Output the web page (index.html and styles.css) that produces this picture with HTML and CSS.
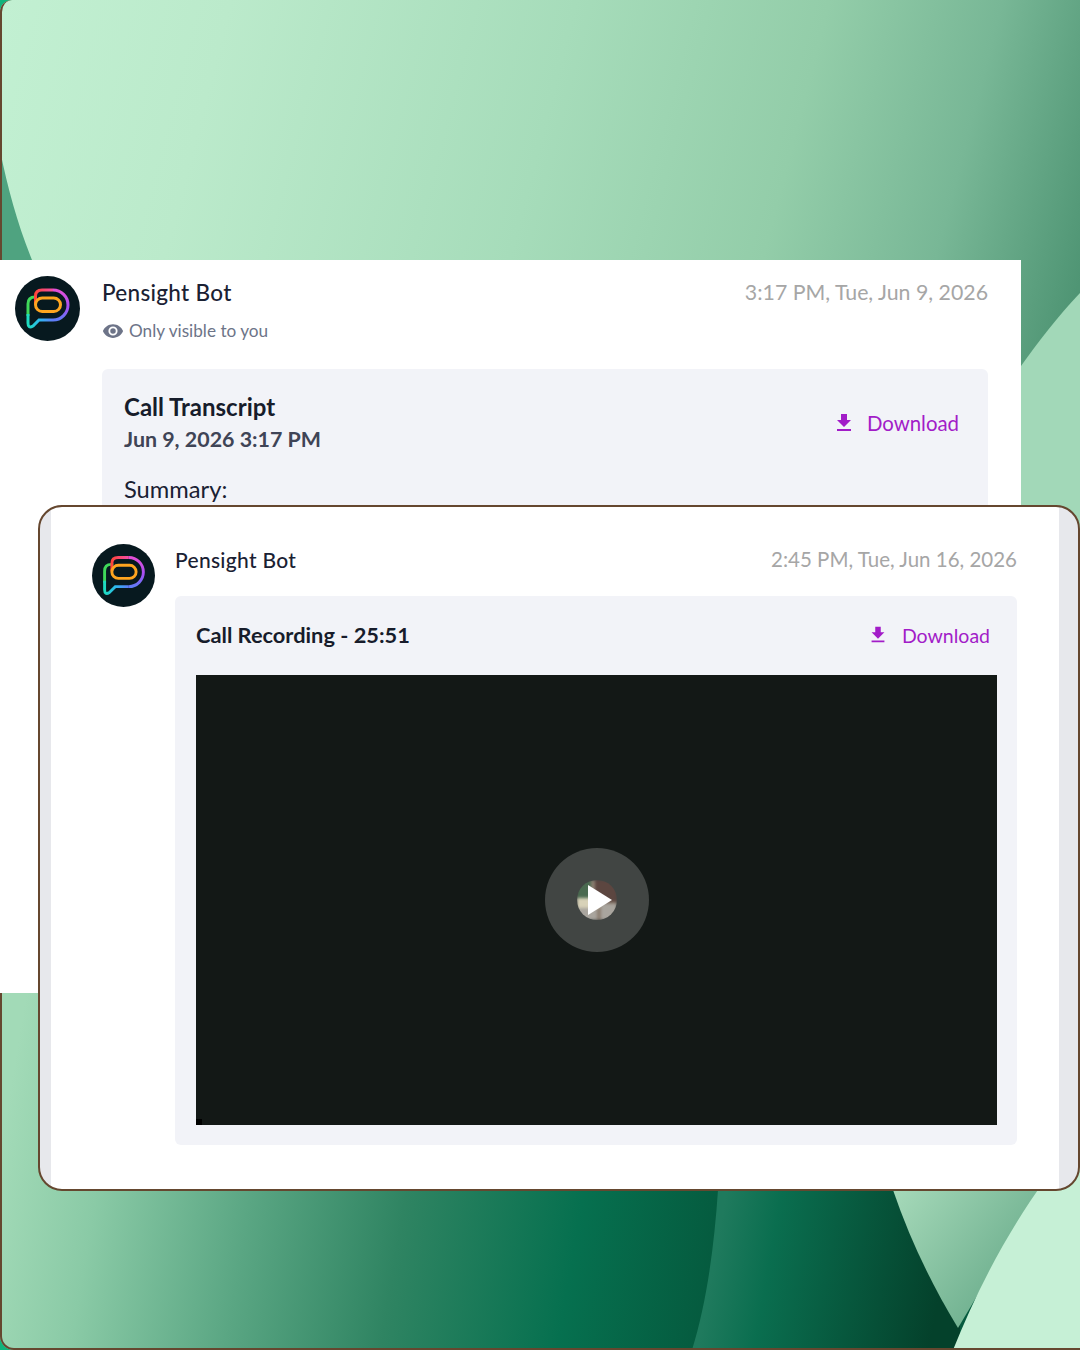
FILE: index.html

```html
<!DOCTYPE html>
<html lang="en">
<head>
<meta charset="utf-8"/>
<title>Pensight Bot</title>
<link rel="stylesheet" href="styles.css">
</head>
<body>
<div class="stage">
  <svg class="backdrop" viewBox="0 0 1080 1350" preserveAspectRatio="none">
    <defs>
      <linearGradient id="bgTop" gradientUnits="userSpaceOnUse" x1="0" y1="0" x2="1080" y2="280">
        <stop offset="0" stop-color="#c2f0d2"/>
        <stop offset="0.2" stop-color="#bbeacb"/>
        <stop offset="0.5" stop-color="#a6dcba"/>
        <stop offset="0.72" stop-color="#93cda9"/>
        <stop offset="0.87" stop-color="#78b796"/>
        <stop offset="1" stop-color="#4f9574"/>
      </linearGradient>
      <linearGradient id="bgBottom" gradientUnits="userSpaceOnUse" x1="0" y1="1150" x2="718" y2="1270">
        <stop offset="0" stop-color="#a2dab7"/>
        <stop offset="0.14" stop-color="#8acaa6"/>
        <stop offset="0.35" stop-color="#5aa683"/>
        <stop offset="0.56" stop-color="#2f8462"/>
        <stop offset="0.8" stop-color="#06704f"/>
        <stop offset="1" stop-color="#055a3e"/>
      </linearGradient>
      <linearGradient id="bgDark" gradientUnits="userSpaceOnUse" x1="716" y1="1250" x2="940" y2="1290">
        <stop offset="0" stop-color="#1f7a5d"/>
        <stop offset="0.24" stop-color="#0a6e4f"/>
        <stop offset="1" stop-color="#04412b"/>
      </linearGradient>
      <linearGradient id="bgWedge" gradientUnits="userSpaceOnUse" x1="900" y1="1190" x2="1040" y2="1300">
        <stop offset="0" stop-color="#a4d8b8"/>
        <stop offset="1" stop-color="#62a685"/>
      </linearGradient>
    </defs>
    <rect width="1080" height="1000" fill="url(#bgTop)"/>
    <path d="M0 150 C8 190 18 225 32 260 L0 260 Z" fill="#4fa380"/>
    <path d="M1080 293 C1058 316 1038 342 1021 366 L1021 1000 L1080 1000 Z" fill="#a2d8b8"/>
    <rect y="990" width="1080" height="360" fill="url(#bgBottom)"/>
    <path d="M718 1190 C714 1250 706 1305 692 1350 L960 1350 L960 1190 Z" fill="url(#bgDark)"/>
    <path d="M893 1190 C910 1240 932 1285 958 1328 L1040 1190 Z" fill="url(#bgWedge)"/>
    <path d="M1080 1150 L1045 1150 L1045 1180 C1005 1235 975 1295 953 1350 L1080 1350 Z" fill="#c6f0d6"/>
  </svg>
  <div class="frame-edge"></div>

  <div class="card card-back">
    <div class="avatar avatar-lg">
      <svg viewBox="0 0 65 65" width="65" height="65">
        <defs>
          <linearGradient id="logoTop" gradientUnits="userSpaceOnUse" x1="20" y1="0" x2="40" y2="0">
            <stop offset="0" stop-color="#ff4438"/>
            <stop offset="1" stop-color="#f14fb4"/>
          </linearGradient>
          <linearGradient id="logoRight" gradientUnits="userSpaceOnUse" x1="0" y1="14" x2="0" y2="44">
            <stop offset="0" stop-color="#e44fd8"/>
            <stop offset="0.6" stop-color="#a24ff2"/>
            <stop offset="1" stop-color="#5f7cf7"/>
          </linearGradient>
          <linearGradient id="logoTail" gradientUnits="userSpaceOnUse" x1="38" y1="0" x2="13" y2="0">
            <stop offset="0" stop-color="#5f7cf7"/>
            <stop offset="0.5" stop-color="#2fb4f0"/>
            <stop offset="1" stop-color="#1edcc0"/>
          </linearGradient>
          <g id="logo">
            <circle cx="32.500" cy="32.500" r="32.500" fill="#07191f"/>
            <path d="M13 40 V28 Q13 21 20 21 H22" fill="none" stroke="#3fd85a" stroke-width="3"/>
            <path d="M38 44 H24 L18 50 Q13 53 13 47 V38" fill="none" stroke="url(#logoTail)" stroke-width="3"/>
            <path d="M38 14 A15 15 0 0 1 38 44" fill="none" stroke="url(#logoRight)" stroke-width="3"/>
            <path d="M20.500 28 V20 Q20.500 14 27 14 H38" fill="none" stroke="url(#logoTop)" stroke-width="3"/>
            <rect x="20.500" y="22" width="25" height="13.500" rx="6.700" fill="none" stroke="#ffa51f" stroke-width="3"/>
          </g>
        </defs>
        <use href="#logo"/>
      </svg>
    </div>
    <div class="message">
      <div class="message-head">
        <div class="sender">Pensight Bot</div>
        <div class="time">3:17 PM, Tue, Jun 9, 2026</div>
      </div>
      <div class="visibility">
        <svg class="eye" viewBox="0 0 24 24" width="22" height="22"><path d="M12 4.5C7 4.5 2.7 7.6 1 12c1.7 4.4 6 7.500 11 7.500s9.300-3.100 11-7.500c-1.700-4.400-6-7.500-11-7.500zm0 12.500a5 5 0 1 1 0-10 5 5 0 0 1 0 10zm0-8a3 3 0 1 0 0 6 3 3 0 0 0 0-6z"/></svg>
        <span>Only visible to you</span>
      </div>
      <div class="attachment transcript">
        <div class="attachment-head">
          <div>
            <div class="attachment-title">Call Transcript</div>
            <div class="attachment-date">Jun 9, 2026 3:17 PM</div>
          </div>
          <a class="download download-back">
            <svg viewBox="0 0 24 24" width="24" height="24"><path d="M19 9h-4V3H9v6H5l7 7 7-7zM5 18v2h14v-2H5z"/></svg>
            <span>Download</span>
          </a>
        </div>
        <div class="summary">Summary:</div>
      </div>
    </div>
  </div>

  <div class="card card-front">
    <div class="avatar">
      <svg viewBox="0 0 65 65" width="63" height="63"><use href="#logo"/></svg>
    </div>
    <div class="message">
      <div class="message-head">
        <div class="sender">Pensight Bot</div>
        <div class="time">2:45 PM, Tue, Jun 16, 2026</div>
      </div>
      <div class="attachment recording">
        <div class="attachment-head">
          <div class="attachment-title">Call Recording - 25:51</div>
          <a class="download">
            <svg viewBox="0 0 24 24" width="22" height="22"><path d="M19 9h-4V3H9v6H5l7 7 7-7zM5 18v2h14v-2H5z"/></svg>
            <span>Download</span>
          </a>
        </div>
        <div class="video">
          <div class="play-btn">
            <div class="thumb">
              <svg viewBox="0 0 40 40" width="40" height="40">
                <g class="thumb-photo">
                  <rect width="40" height="40" fill="#8d7f72"/>
                  <rect width="14" height="18" fill="#4a6a50"/>
                  <rect y="18" width="22" height="10" fill="#d8d2b8"/>
                  <rect y="28" width="20" height="12" fill="#a9a59e"/>
                  <rect x="18" width="22" height="22" fill="#5c4640"/>
                  <rect x="24" y="24" width="16" height="16" fill="#a9a59e"/>
                </g>
                <path d="M11 5 L35 20 L11 35 Z" fill="#fff"/>
              </svg>
            </div>
          </div>
          <div class="progress-dot"></div>
        </div>
      </div>
    </div>
  </div>
</div>
</body>
</html>
```

FILE: styles.css

```css
* { box-sizing: border-box; }
html, body { margin: 0; padding: 0; }
body { font-family: Lato, "Liberation Sans", sans-serif; background: #fff; }

.stage { position: relative; width: 1080px; height: 1350px; overflow: hidden; padding-top: 260px; background: #10b47c; }
.backdrop { position: absolute; top: 0; left: 0; width: 1080px; height: 1350px; border-radius: 12px 0 0 14px; }
.frame-edge {
  position: absolute; top: 0; left: 0; width: 1200px; height: 1350px;
  border: 2px solid #65472f;
  border-top: none;
  border-radius: 12px 0 0 14px;
}

.card { display: flex; background: #fff; }
.card-back {
  position: relative;
  width: 1021px; height: 733px;
  padding: 16px 33px 0 15px;
  gap: 22px;
  overflow: hidden;
}
.card-front {
  position: absolute; top: 505px; left: 38px;
  width: 1042px; height: 686px;
  padding: 37px 61px 0 52px;
  gap: 20px;
  border: 2px solid #65472f;
  border-radius: 24px;
  background: linear-gradient(to right, #e7e8ec 11px, #fff 11px, #fff calc(100% - 19px), #e7e8ec calc(100% - 19px));
}

.avatar { flex: none; width: 63px; height: 63px; line-height: 0; }
.avatar-lg { width: 65px; height: 65px; }

.message { flex: 1; min-width: 0; }
.message-head { display: flex; justify-content: space-between; align-items: center; }
.sender { font-size: 22.500px; font-weight: 500; color: #1a2133; line-height: 33px; letter-spacing: 0.3px; }
.time { font-size: 21.300px; color: #a6a6a6; line-height: 33px; }
.card-front .message-head { height: 31px; }
.card-front .sender { font-size: 21px; }
.card-front .time { font-size: 20.500px; }

.visibility { display: flex; align-items: center; gap: 5px; margin-top: 8px; font-size: 17.200px; color: #6d7488; line-height: 28px; }
.eye { fill: #6d7488; flex: none; }

.attachment { background: #f2f3f8; border-radius: 6px; }
.attachment-head { display: flex; justify-content: space-between; }
.attachment-title { font-size: 24px; font-weight: 700; color: #171c2b; line-height: 30px; }
.attachment-date { font-size: 21.400px; font-weight: 700; color: #3f4456; margin-top: 2px; line-height: 30px; }

.transcript { margin-top: 24px; padding: 23px 29px 30px 22px; height: 500px; }
.transcript .attachment-head { align-items: center; }
.summary { margin-top: 20px; font-size: 23.700px; color: #1a2133; line-height: 30px; }

.recording { margin-top: 21px; padding: 24px 20px 20px 21px; height: 549px; }
.recording .attachment-title { font-size: 21.800px; }
.recording .attachment-head { align-items: center; margin-bottom: 25px; padding-right: 7px; }

.download { display: flex; align-items: center; gap: 13px; color: #a21cc8; font-size: 19.500px; font-weight: 400; }
.download svg { fill: #a21cc8; flex: none; }
.download-back { gap: 11px; font-size: 20.400px; }

.video { position: relative; height: 450px; background: #131816; display: flex; justify-content: center; align-items: center; }
.play-btn { width: 104px; height: 104px; border-radius: 50%; background: #414543; display: flex; justify-content: center; align-items: center; }
.thumb { width: 40px; height: 40px; border-radius: 50%; overflow: hidden; line-height: 0; }
.thumb-photo { filter: blur(1.5px); }
.progress-dot { position: absolute; left: 0; bottom: 0; width: 6px; height: 6px; background: #000; }
```
